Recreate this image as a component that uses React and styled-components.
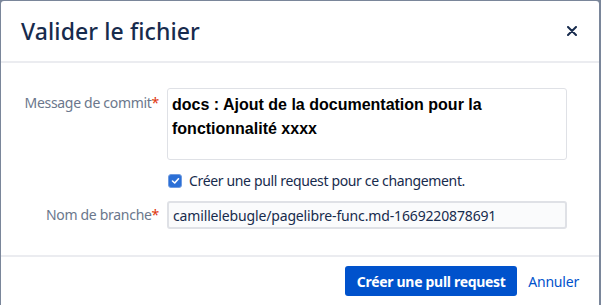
import styled, { createGlobalStyle } from "styled-components";

const GlobalStyle = createGlobalStyle`
  html, body {
    margin: 0;
    background: #7a869a;
  }
  body {
    font-family: "Noto Sans", "Open Sans", sans-serif;
    color: #172b4d;
  }
`;

const Blanket = styled.div`
  padding: 1px 1px 0 1px;
  height: 304px;
  overflow: hidden;
`;

const Modal = styled.div`
  width: 598px;
  height: 320px;
  background: #ffffff;
  border-radius: 3px 3px 0 0;
  display: flex;
  flex-direction: column;
`;

const Header = styled.div`
  height: 60px;
  display: flex;
  align-items: center;
  justify-content: space-between;
  padding: 0 20px;
  border-bottom: 2px solid #ebecf0;
`;

const Title = styled.h1`
  margin: 0;
  font-size: 23px;
  font-weight: 500;
  letter-spacing: 0.1px;
  color: #172b4d;
`;

const CloseButton = styled.button`
  border: none;
  background: none;
  padding: 0;
  width: 14px;
  height: 14px;
  display: flex;
  align-items: center;
  justify-content: center;
  cursor: pointer;
`;

const Body = styled.form`
  display: grid;
  grid-template-columns: 138px 400px;
  column-gap: 8px;
  padding: 25px 0 26px 20px;
  border-bottom: 2px solid #ebecf0;
`;

const Label = styled.label`
  text-align: right;
  font-size: 14px;
  line-height: 20px;
  letter-spacing: -0.3px;
  color: #6b778c;
  align-self: ${(props) => props.align || "start"};
  padding-top: ${(props) => (props.align ? "0" : "5px")};
  white-space: nowrap;
`;

const Required = styled.span`
  color: #de350b;
`;

const TextArea = styled.div`
  height: 72px;
  box-sizing: border-box;
  border: 1px solid #dfe1e6;
  border-radius: 3px;
  padding: 4px 4px;
  font-family: "Liberation Sans", Arial, sans-serif;
  font-weight: bold;
  font-size: 16px;
  line-height: 24px;
  color: #000000;
`;

const CheckRow = styled.div`
  grid-column: 2;
  display: flex;
  align-items: center;
  gap: 7px;
  margin: 11px 0 10px 1px;
  font-size: 14px;
  line-height: 20px;
  letter-spacing: -0.35px;
  color: #172b4d;
`;

const CheckBox = styled.span`
  width: 12px;
  height: 12px;
  border-radius: 3px;
  background: #2b6fd6;
  border: 1px solid #6f9be0;
  display: flex;
  align-items: center;
  justify-content: center;
`;

const Input = styled.div`
  height: 28px;
  box-sizing: border-box;
  border: 2px solid #dfe1e6;
  border-radius: 3px;
  background: #fafbfc;
  padding: 0 4px;
  display: flex;
  align-items: center;
  font-size: 14px;
  letter-spacing: -0.15px;
  color: #172b4d;
`;

const Footer = styled.div`
  display: flex;
  justify-content: flex-end;
  align-items: center;
  gap: 11px;
  padding: 9px 20px 0 0;
`;

const PrimaryButton = styled.button`
  height: 30px;
  width: 172px;
  border: none;
  border-radius: 3px;
  background: #0052cc;
  color: #ffffff;
  font-family: inherit;
  font-size: 14px;
  font-weight: bold;
  letter-spacing: -0.3px;
  cursor: pointer;
`;

const LinkButton = styled.button`
  border: none;
  background: none;
  padding: 0;
  color: #0052cc;
  font-family: inherit;
  font-size: 14px;
  letter-spacing: -0.2px;
  cursor: pointer;
`;

export default function App() {
  return (
    <>
      <GlobalStyle />
      <Blanket>
        <Modal>
          <Header>
            <Title>Valider le fichier</Title>
            <CloseButton aria-label="Fermer">
              <svg width="10" height="10" viewBox="0 0 10 10">
                <path
                  d="M1 1 L9 9 M9 1 L1 9"
                  stroke="#172b4d"
                  strokeWidth="2"
                  strokeLinecap="round"
                />
              </svg>
            </CloseButton>
          </Header>
          <Body>
            <Label>
              Message de commit<Required>*</Required>
            </Label>
            <TextArea>
              docs : Ajout de la documentation pour la fonctionnalité xxxx
            </TextArea>
            <CheckRow>
              <CheckBox>
                <svg width="9" height="8" viewBox="0 0 9 8">
                  <path
                    d="M1.5 4 L3.7 6 L7.5 1.8"
                    stroke="#ffffff"
                    strokeWidth="1.6"
                    fill="none"
                    strokeLinecap="round"
                    strokeLinejoin="round"
                  />
                </svg>
              </CheckBox>
              Créer une pull request pour ce changement.
            </CheckRow>
            <Label align="center">
              Nom de branche<Required>*</Required>
            </Label>
            <Input>camillelebugle/pagelibre-func.md-1669220878691</Input>
          </Body>
          <Footer>
            <PrimaryButton>Créer une pull request</PrimaryButton>
            <LinkButton>Annuler</LinkButton>
          </Footer>
        </Modal>
      </Blanket>
    </>
  );
}
